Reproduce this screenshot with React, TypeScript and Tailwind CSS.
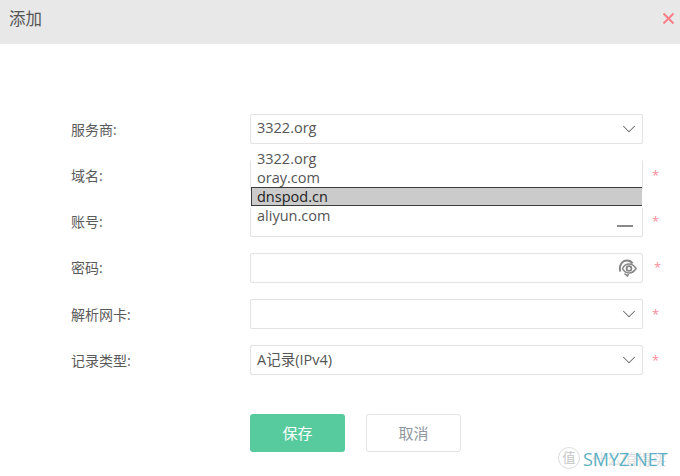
import React from 'react';
import { ChevronDown } from 'lucide-react';

const fontStack = '[font-family:"Open_Sans","Noto_Sans_CJK_SC",sans-serif]';

const Star = ({ className = 'ml-[9px]' }: { className?: string }) => (
  <span className={`${className} text-[13px] leading-none text-[#f98d9a]`}>*</span>
);

const Arrow = () => (
  <ChevronDown size={22} strokeWidth={1.1} className="mr-[2px] text-[#666666]" />
);

const EyeIcon = () => (
  <svg width="20" height="20" viewBox="0 0 20 20" fill="none" stroke="#858585" className="mr-[4px]">
    <path d="M2.500 13.500C0.500 9 3.500 2.500 9 2.500c2.500 0 4.500 1.200 5.500 3" strokeWidth="1.900" />
    <path d="M4.500 10.500C6 7.500 8.500 6 11 6c3 0 5.500 2 7 4.500-1.500 2.500-4 4.500-7 4.500-2.500 0-5-1.500-6.500-4.500z" strokeWidth="1.500" />
    <circle cx="11" cy="10.500" r="2.400" strokeWidth="1.800" />
    <path d="M6.500 15.500l3 2.500 1-2" strokeWidth="1.600" />
  </svg>
);

type RowProps = {
  label: string;
  value?: string;
  right?: React.ReactNode;
  starClass?: string;
  noStar?: boolean;
};

const FormRow = ({ label, value, right, starClass, noStar }: RowProps) => (
  <div className="flex h-[30px] items-center">
    <label className="w-[179px] text-[14px] text-[#5a5a5a]">{label}</label>
    <div className="flex h-[30px] w-[393px] items-center justify-between rounded-[2px] border border-[#e3e3e3] bg-white pl-[6px] text-[14.500px] text-[#555555] shadow-[0_0_1px_#eeeeee]">
      <span className="pb-[2px]">{value}</span>
      {right}
    </div>
    {!noStar && <Star className={starClass} />}
  </div>
);

export default function App() {
  return (
    <div className={`relative h-[476px] w-[680px] overflow-hidden bg-white ${fontStack}`}>
      <div className="flex h-[44px] items-center justify-between bg-[#e8e8e8] pb-[6px] pl-[9px] pr-[5px]">
        <h1 className="text-[16.500px] font-normal text-[#555555]">添加</h1>
        <svg width="13" height="13" viewBox="0 0 13 13" stroke="#fb7f88" strokeWidth="2" className="mt-[-2px]">
          <path d="M1.500 1.500l10 10M11.500 1.500l-10 10" />
        </svg>
      </div>

      <div className="relative flex flex-col gap-[16.300px] pl-[71px] pt-[70px]">
        <FormRow label="服务商:" value="3322.org" right={<Arrow />} noStar />
        <FormRow label="域名:" starClass="ml-[9px]" />
        <FormRow label="账号:" starClass="ml-[9px]" />
        <FormRow label="密码:" right={<EyeIcon />} starClass="ml-[11px]" />
        <FormRow label="解析网卡:" right={<Arrow />} starClass="ml-[9px]" />
        <FormRow label="记录类型:" value="A记录(IPv4)" right={<Arrow />} starClass="ml-[9px]" />

        {/* native select popup sits over the next rows */}
        <div className="absolute left-[251px] top-[104px] w-[391px] bg-white pt-[1px] text-[14.500px] leading-[19px] text-[#555555]">
          <div className="h-[19px] pl-[6px]">3322.org</div>
          <div className="h-[19px] pl-[6px]">oray.com</div>
          <div className="h-[19px] border border-r-0 border-[#3c3c3c] bg-[#cbcbcb] pl-[5px] leading-[17px] text-[#222222]">dnspod.cn</div>
          <div className="h-[19px] pl-[6px]">aliyun.com</div>
        </div>
        <div className="absolute left-[617px] top-[180.500px] h-[2px] w-[16px] bg-[#8a8a8a]" />
      </div>

      <div className="ml-[250px] mt-[39px] flex gap-[21px]">
        <button className="h-[38px] w-[95px] rounded-[3px] bg-[#57ca9e] text-[15px] text-white">保存</button>
        <button className="h-[38px] w-[95px] rounded-[3px] border border-[#e3e3e3] bg-white text-[15px] text-[#8f979f]">取消</button>
      </div>

      {/* watermark */}
      <div className="absolute left-[558px] top-[446px] flex h-[24px] items-center">
        <span className="flex h-[22px] w-[22px] items-center justify-center rounded-full border border-[#dddddd] text-[13px] text-[#c4c4c4]">值</span>
        <span className="absolute left-[34px] top-[2px] whitespace-nowrap text-[15px] text-[#e0e0e0]">什么值得买</span>
        <span className="absolute left-[25px] top-[0px] text-[18px] font-normal text-[#5fb0c4]">SMYZ.NET</span>
      </div>
    </div>
  );
}
